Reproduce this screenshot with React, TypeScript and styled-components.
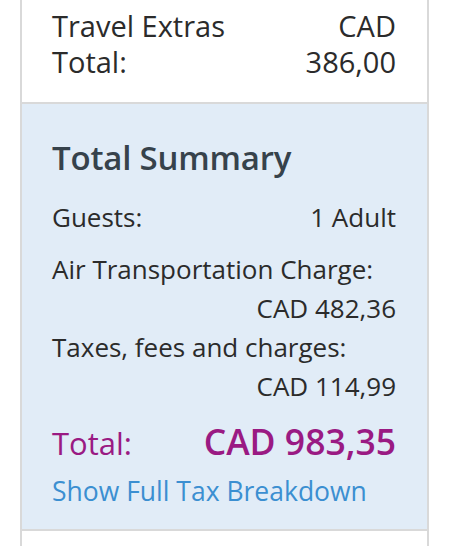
import React from "react";
import styled, { createGlobalStyle } from "styled-components";

const Global = createGlobalStyle`
  html, body { margin: 0; padding: 0; background: #ffffff; }
  body { font-family: "Open Sans", "Liberation Sans", sans-serif; -webkit-font-smoothing: antialiased; }
`;

const Frame = styled.div`
  margin-left: 20px;
  width: 405px;
  border-left: 2px solid #d9d9d9;
  border-right: 2px solid #d9d9d9;
  height: 546px;
  display: flex;
  flex-direction: column;
`;

const ExtrasSection = styled.section`
  display: flex;
  justify-content: space-between;
  padding: 8px 31px 0 30px;
  height: 94px;
  flex-shrink: 0;
  border-bottom: 2px solid #d9d9d9;
  color: #2b2b2b;
  font-size: 29px;
  line-height: 36px;
`;

const Stack = styled.div<{ $align?: "left" | "right" }>`
  display: flex;
  flex-direction: column;
  text-align: ${(p) => p.$align ?? "left"};
`;

const Summary = styled.section`
  background: #e1ecf7;
  padding: 34px 31px 0 30px;
  height: 427px;
  flex-shrink: 0;
  border-bottom: 2px solid #d9d9d9;
  box-sizing: border-box;
  color: #2b2b2b;
`;

const Heading = styled.h2`
  margin: 0 0 20px;
  font-size: 33px;
  font-weight: 600;
  line-height: 40px;
  color: #36424b;
  letter-spacing: -0.2px;
`;

const Row = styled.div`
  display: flex;
  justify-content: space-between;
  font-size: 26px;
  line-height: 38px;
`;

const Label = styled.div<{ $gap?: number }>`
  font-size: 26px;
  line-height: 39px;
  margin-top: ${(p) => p.$gap ?? 0}px;
`;

const Amount = styled.div`
  font-size: 26px;
  line-height: 39px;
  text-align: right;
`;

const TotalRow = styled.div`
  display: flex;
  justify-content: space-between;
  align-items: baseline;
  color: #9a1a83;
  margin-top: 15px;
`;

const TotalLabel = styled.span`
  font-size: 31px;
  line-height: 40px;
`;

const TotalValue = styled.span`
  font-size: 35.5px;
  line-height: 40px;
  font-weight: 600;
`;

const BreakdownLink = styled.a`
  display: block;
  margin-top: 12px;
  color: #3b8fd1;
  font-size: 26.5px;
  line-height: 32px;
  text-decoration: none;
`;

export default function App() {
  return (
    <>
      <Global />
      <Frame>
        <ExtrasSection>
          <Stack>
            <span>Travel Extras</span>
            <span>Total:</span>
          </Stack>
          <Stack $align="right">
            <span>CAD</span>
            <span>386,00</span>
          </Stack>
        </ExtrasSection>
        <Summary>
          <Heading>Total Summary</Heading>
          <Row>
            <span>Guests:</span>
            <span>1 Adult</span>
          </Row>
          <Label $gap={14}>Air Transportation Charge:</Label>
          <Amount>CAD 482,36</Amount>
          <Label>Taxes, fees and charges:</Label>
          <Amount>CAD 114,99</Amount>
          <TotalRow>
            <TotalLabel>Total:</TotalLabel>
            <TotalValue>CAD 983,35</TotalValue>
          </TotalRow>
          <BreakdownLink href="#">Show Full Tax Breakdown</BreakdownLink>
        </Summary>
      </Frame>
    </>
  );
}
